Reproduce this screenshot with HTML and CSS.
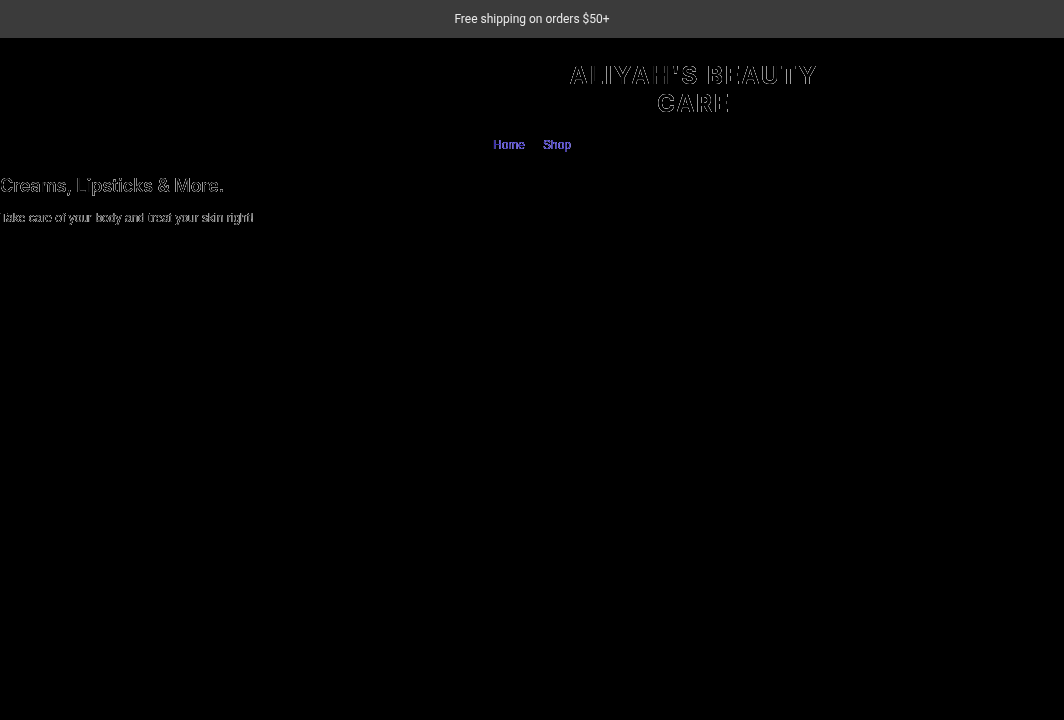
FILE: index.html
```
<!DOCTYPE html>
<html lang="en">
<head>
    <meta charset="UTF-8">
    <meta name="viewport" content="width=device-width, initial-scale=1.0">
    <title>Aliyah's Beauty Care</title>
    <link rel="stylesheet" href="styles.css">
</head>
<body>
    <div class="announcement">Free shipping on orders $50+</div>
    <header class="header">
        <h1 class="logo">ALIYAH'S BEAUTY CARE</h1>
        <nav class="menu">
            <a href="#home">Home</a>
            <a href="#shop">Shop</a>
        </nav>
    </header>
    <main class="intro">
        <h2>Creams, Lipsticks &amp; More.</h2>
        <p>Take care of your body and treat your skin right!</p>
    </main>
</body>
</html>
```
FILE: styles.css
```
body {
    margin: 0;
    background-color: #000;
    color: #000;
    font-family: "Liberation Sans", Arial, sans-serif;
    font-size: 12px;
    line-height: 18px;
}
.announcement {
    padding: 10px;
    background-color: #3b3b3b;
    color: #e8e8e8;
    font-family: Roboto, sans-serif;
    text-align: center;
    will-change: transform;
}
.header {
    display: flex;
    flex-direction: column;
    will-change: transform;
}
/* dark letters, only the edges catch light */
.logo,
.intro {
    text-shadow: 0 0 0 #fff, 0 0 0 #fff, 0 0 0 #fff, 0 0 0 #fff, 0 0 0 #fff;
    will-change: transform;
}
.logo,
.intro h2 {
    font-family: Inter, sans-serif;
}
.logo {
    align-self: center;
    max-width: 300px;
    margin: 24px 0 0 324px;
    font-size: 24px;
    font-weight: 700;
    line-height: 28px;
    letter-spacing: 2px;
    text-align: center;
}
.menu {
    display: flex;
    justify-content: center;
    gap: 18px;
    padding-top: 18px;
}
.menu a {
    color: #3a30b0;
    text-decoration: none;
    text-shadow: 0 0 0 #b0a8ff, 0 0 0 #b0a8ff, 0 0 0 #b0a8ff, 0 0 0 #b0a8ff, 0 0 0 #b0a8ff;
}
.intro h2 {
    margin: 20px 0 0;
    font-size: 18px;
    font-weight: 500;
    line-height: 24px;
}
.intro p {
    margin: 11px 0 0;
}
```
